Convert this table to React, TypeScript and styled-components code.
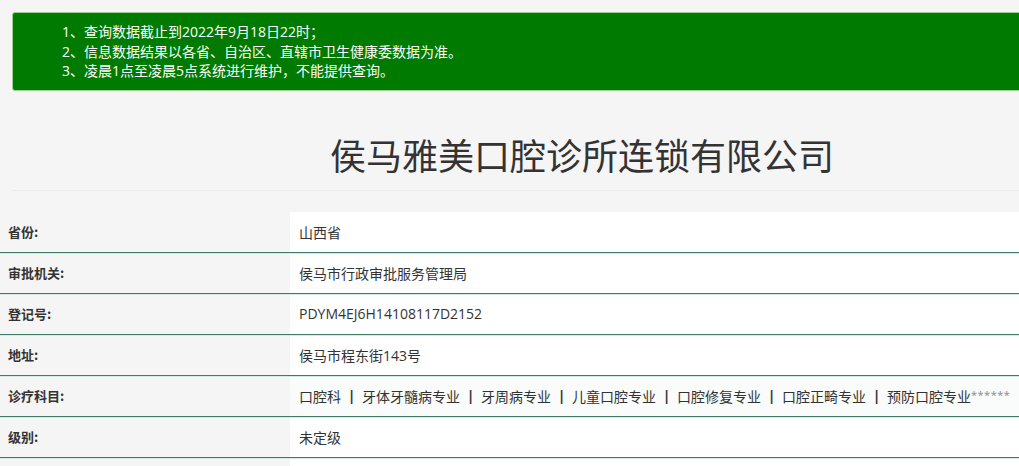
import React from "react";
import styled, { createGlobalStyle } from "styled-components";

const Global = createGlobalStyle`
  html, body {
    margin: 0;
    padding: 0;
    background: #f5f5f5;
    overflow: hidden;
  }
  body {
    font-family: "Noto Sans CJK SC", "Noto Sans", sans-serif;
    color: #333;
  }
`;

const Page = styled.div`
  width: 1019px;
  overflow: hidden;
`;

const Notice = styled.div`
  margin: 12px 0 0 12px;
  width: 1140px;
  box-sizing: border-box;
  background: #007a00;
  border: 1px solid #9ccf8f;
  border-radius: 3px;
  padding: 9px 0 9px 49px;
  color: #fff;
  font-family: "Open Sans", "Noto Sans CJK SC", sans-serif;
  font-size: 14px;
  line-height: 19.5px;
`;

const Title = styled.h1`
  margin: 0 0 0 12px;
  width: 1140px;
  padding: 41px 0 14px;
  text-align: center;
  font-size: 36px;
  line-height: 44px;
  font-weight: 400;
  color: #333;
  border-bottom: 1px solid #ebebeb;
`;

const Table = styled.div`
  margin-top: 21px;
  width: 1200px;
`;

const Row = styled.div<{ $first?: boolean }>`
  display: grid;
  grid-template-columns: 290px 1fr;
  height: 41px;
  box-sizing: border-box;
  border-bottom: 1px solid #3f7c66;
  & > * {
    box-shadow: ${(p) => (p.$first ? "none" : "inset 0 1px 0 #d3ebe0")};
  }
`;

const Label = styled.div`
  display: flex;
  align-items: center;
  padding-left: 8px;
  font-size: 13px;
  font-weight: 700;
  color: #333;
`;

const Value = styled.div<{ $tint?: boolean }>`
  display: flex;
  align-items: center;
  padding-left: 9px;
  font-family: "Open Sans", "Noto Sans CJK SC", sans-serif;
  font-size: 14px;
  color: #333;
  background: ${(p) => (p.$tint ? "#f9fcfb" : "#fff")};
  white-space: pre;
`;

const Sep = styled.span`
  display: inline-block;
  width: 21px;
  text-align: center;
  font-weight: 700;
  color: #333;
`;

const Stars = styled.span`
  font-size: 11px;
  letter-spacing: 0.5px;
  color: #888;
  align-self: flex-start;
  margin-top: 11px;
`;

const subjects = [
  "口腔科",
  "牙体牙髓病专业",
  "牙周病专业",
  "儿童口腔专业",
  "口腔修复专业",
  "口腔正畸专业",
  "预防口腔专业",
];

const rows: { label: string; value: React.ReactNode; tint?: boolean }[] = [
  { label: "省份:", value: "山西省" },
  { label: "审批机关:", value: "侯马市行政审批服务管理局" },
  { label: "登记号:", value: "PDYM4EJ6H14108117D2152" },
  { label: "地址:", value: "侯马市程东街143号" },
  {
    label: "诊疗科目:",
    tint: true,
    value: (
      <>
        {subjects.map((s, i) => (
          <React.Fragment key={s}>
            {i > 0 && <Sep>|</Sep>}
            {s}
          </React.Fragment>
        ))}
        <Stars>******</Stars>
      </>
    ),
  },
  { label: "级别:", value: "未定级" },
  { label: "", value: "" },
];

export default function App() {
  return (
    <Page>
      <Global />
      <Notice>
        <div>1、查询数据截止到2022年9月18日22时；</div>
        <div>2、信息数据结果以各省、自治区、直辖市卫生健康委数据为准。</div>
        <div>3、凌晨1点至凌晨5点系统进行维护，不能提供查询。</div>
      </Notice>
      <Title>侯马雅美口腔诊所连锁有限公司</Title>
      <Table>
        {rows.map((r, i) => (
          <Row key={i} $first={i === 0}>
            <Label>{r.label}</Label>
            <Value $tint={r.tint}>{r.value}</Value>
          </Row>
        ))}
      </Table>
    </Page>
  );
}
